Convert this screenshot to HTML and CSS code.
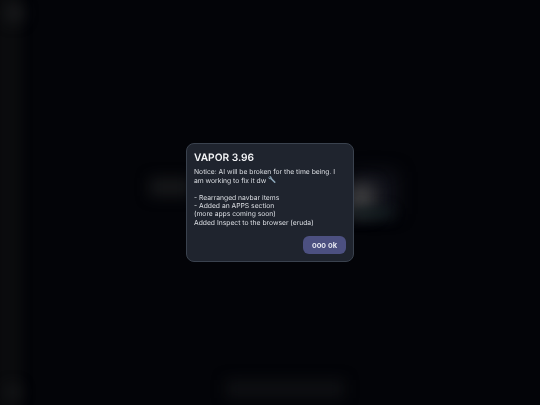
FILE: index.html
```html
<!DOCTYPE html>
<html lang="en">
<head>
<meta charset="utf-8">
<title>VAPOR</title>
<link rel="stylesheet" href="styles.css">
</head>
<body>
<div class="backdrop" aria-hidden="true">
  <div class="sidebar"></div>
  <div class="glow glow-top"></div>
  <div class="glow glow-bottom"></div>
  <div class="glow hero-left"></div>
  <div class="glow hero-right"></div>
  <div class="glow hero-light"></div>
  <div class="glow hero-teal"></div>
  <div class="glow footer"></div>
</div>
<main class="overlay">
  <section class="modal">
    <h1 class="title">VAPOR 3.96</h1>
    <div class="body">
      <p>Notice: AI will be broken for the time being. I am working to fix it dw <svg class="wrench" viewBox="0 0 10 10"><path d="M.8 1.4 2.6 3.1 3.3 2.5 1.6.8C3-.2 4.8.8 4.6 2.5L9.2 7.1C10 8 8.7 9.4 7.8 8.5L3.1 3.9C1.6 4.2.2 3 .8 1.4Z"/></svg></p>
      <p class="gap">- Rearranged navbar items</p>
      <p>- Added an APPS section</p>
      <p>(more apps coming soon)</p>
      <p>Added Inspect to the browser (eruda)</p>
    </div>
    <div class="actions"><button class="ok" type="button">ooo ok</button></div>
  </section>
</main>
</body>
</html>
```
FILE: styles.css
```css
* { box-sizing: border-box; }
html, body { margin: 0; height: 100%; }
body {
  background: #030408;
  font-family: Inter, "Liberation Sans", sans-serif;
  text-rendering: geometricPrecision;
  overflow: hidden;
  position: relative;
}
.backdrop { position: absolute; inset: 0; overflow: hidden; }
.sidebar {
  position: absolute; left: -6px; top: -10px; bottom: -10px; width: 28px;
  background: #0a0b0d; filter: blur(5px);
}
.glow { position: absolute; filter: blur(7px); }
.glow-top { left: 4px; top: 3px; width: 20px; height: 20px; border-radius: 50%; background: #17181a; }
.glow-bottom { left: 5px; top: 385px; width: 16px; height: 14px; border-radius: 50%; background: #151618; }
.hero-left { left: 150px; top: 178px; width: 40px; height: 18px; background: #161719; }
.hero-right { left: 352px; top: 172px; width: 44px; height: 42px; background: #11121a; filter: blur(9px); }
.hero-light { left: 348px; top: 184px; width: 26px; height: 30px; background: #3c3c3e; filter: blur(8px); }
.hero-teal { left: 352px; top: 208px; width: 40px; height: 10px; background: #131d20; filter: blur(6px); }
.footer { left: 226px; top: 380px; width: 118px; height: 18px; background: #0e0f12; filter: blur(7px); }
.overlay {
  position: absolute; inset: 0;
  display: flex; align-items: flex-start; justify-content: center;
  padding-top: 143px;
}
.modal {
  width: 168px; height: 119px;
  padding: 8px 7px 7px;
  display: flex; flex-direction: column;
  background: #1f242e;
  border: 1px solid #3a424e;
  border-radius: 8px;
  color: #dcdfe4;
  filter: blur(0.25px);
}
.title {
  margin: 0 0 2.5px;
  font-size: 10.2px; line-height: 13px; font-weight: 600;
  color: #f4f5f7;
}
.body { font-size: 6.75px; line-height: 8.35px; }
.body p { margin: 0; }
.body .gap { margin-top: 8.35px; }
.wrench { width: 8px; height: 8px; vertical-align: -1px; }
.wrench path { fill: #8fa9bb; }
.actions { margin-top: auto; display: flex; justify-content: flex-end; }
.ok {
  width: 43px; height: 18px; padding: 0;
  border: 0; border-radius: 6px;
  background: #4c5080;
  color: #f0f1f8;
  font: 600 7.7px Inter, "Liberation Sans", sans-serif;
}
```
